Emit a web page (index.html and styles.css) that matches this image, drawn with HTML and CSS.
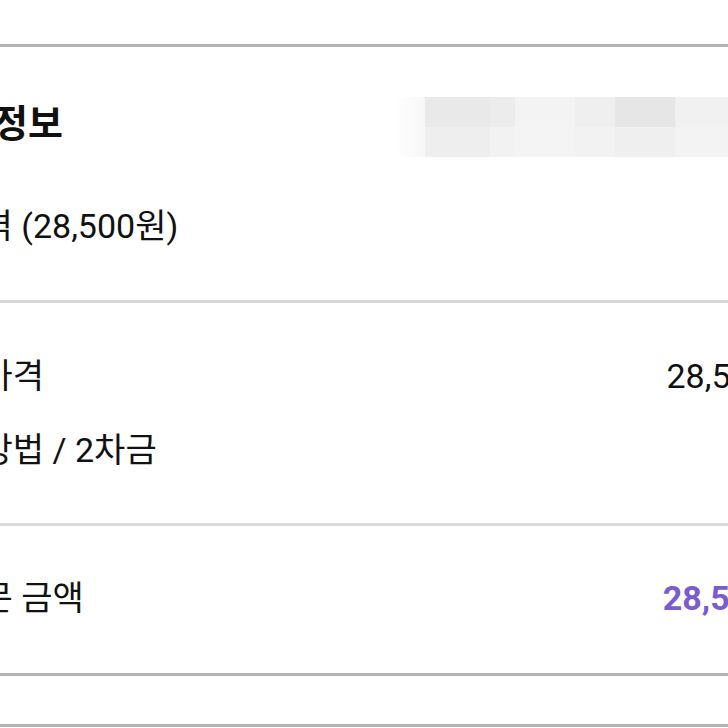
FILE: index.html
```html
<!DOCTYPE html>
<html lang="ko">
<head>
<meta charset="utf-8">
<link rel="stylesheet" href="styles.css">
</head>
<body>
<div class="page">
  <div class="top"></div>
  <section class="sec sec-info">
    <div class="head-row">
      <h2 class="heading">주문정보</h2>
      <div class="masked">
        <div class="mrow">
          <span class="c c1"></span><span class="c c2"></span><span class="c c3"></span><span class="c c4"></span><span class="c c5"></span><span class="c c6"></span><span class="c c7"></span>
        </div>
        <div class="mrow">
          <span class="c c1"></span><span class="c d2"></span><span class="c d3"></span><span class="c d4"></span><span class="c d5"></span><span class="c d6"></span><span class="c d7"></span>
        </div>
      </div>
    </div>
    <div class="row"><span class="label">총가격 (28,500원)</span></div>
  </section>
  <section class="sec sec-price">
    <div class="row"><span class="label">판매가격</span><span class="value">28,500원</span></div>
    <div class="row"><span class="label">결제방법 / 2차금</span></div>
  </section>
  <section class="sec sec-total">
    <div class="row"><span class="label">총주문 금액</span><span class="value total">28,500원</span></div>
  </section>
  <div class="bottom"></div>
</div>
</body>
</html>
```

FILE: styles.css
```css
html, body {
  margin: 0;
  padding: 0;
  background: #ffffff;
  overflow: hidden;
}
.page {
  width: 883px;
  margin-left: -81px;
  font-family: Roboto, "Noto Sans CJK KR", "Noto Sans", sans-serif;
  color: #111111;
}
.top {
  height: 44px;
  border-bottom: 3px solid #b2b2b2;
}
.sec {
  display: flex;
  flex-direction: column;
}
.sec-info {
  padding-top: 50px;
  padding-bottom: 52px;
  gap: 47px;
  border-bottom: 3px solid #d7d7d7;
}
.sec-price {
  padding-top: 51px;
  padding-bottom: 51px;
  gap: 30px;
  border-bottom: 3px solid #dadada;
}
.sec-total {
  padding-top: 50px;
  padding-bottom: 53px;
  border-bottom: 3px solid #b4b4b4;
}
.bottom {
  height: 48px;
  border-bottom: 3px solid #b4b4b4;
}
.head-row {
  display: flex;
  align-items: center;
  height: 60px;
}
.heading {
  margin: 0;
  font-size: 38px;
  font-weight: 700;
  line-height: 60px;
  position: relative;
  top: -3px;
  left: 4px;
}
.masked {
  margin-left: auto;
  width: 407px;
  height: 60px;
  display: flex;
  flex-direction: column;
}
.mrow {
  display: flex;
  flex: 1;
}
.c { display: block; height: 100%; }
.c1 { width: 30px; background: linear-gradient(90deg, #ffffff, #f7f7f7); }
.c2 { width: 65px; background: #e9e9e9; }
.c3 { width: 25px; background: #ececec; }
.c4 { width: 60px; background: #f3f3f3; }
.c5 { width: 40px; background: #efefef; }
.c6 { width: 60px; background: #e6e6e6; }
.c7 { flex: 1; background: #f1f1f1; }
.d2 { width: 65px; background: #eeeeee; }
.d3 { width: 25px; background: #f2f2f2; }
.d4 { width: 60px; background: #f4f4f4; }
.d5 { width: 40px; background: #f2f2f2; }
.d6 { width: 60px; background: #efefef; }
.d7 { flex: 1; background: #f3f3f3; }
.row {
  display: flex;
  align-items: center;
  justify-content: space-between;
  height: 44px;
  font-size: 34px;
  line-height: 44px;
}
.label { white-space: nowrap; }
.value { white-space: nowrap; padding-right: 2px; }
.total {
  color: #7a5cd0;
  font-weight: 700;
}
```
